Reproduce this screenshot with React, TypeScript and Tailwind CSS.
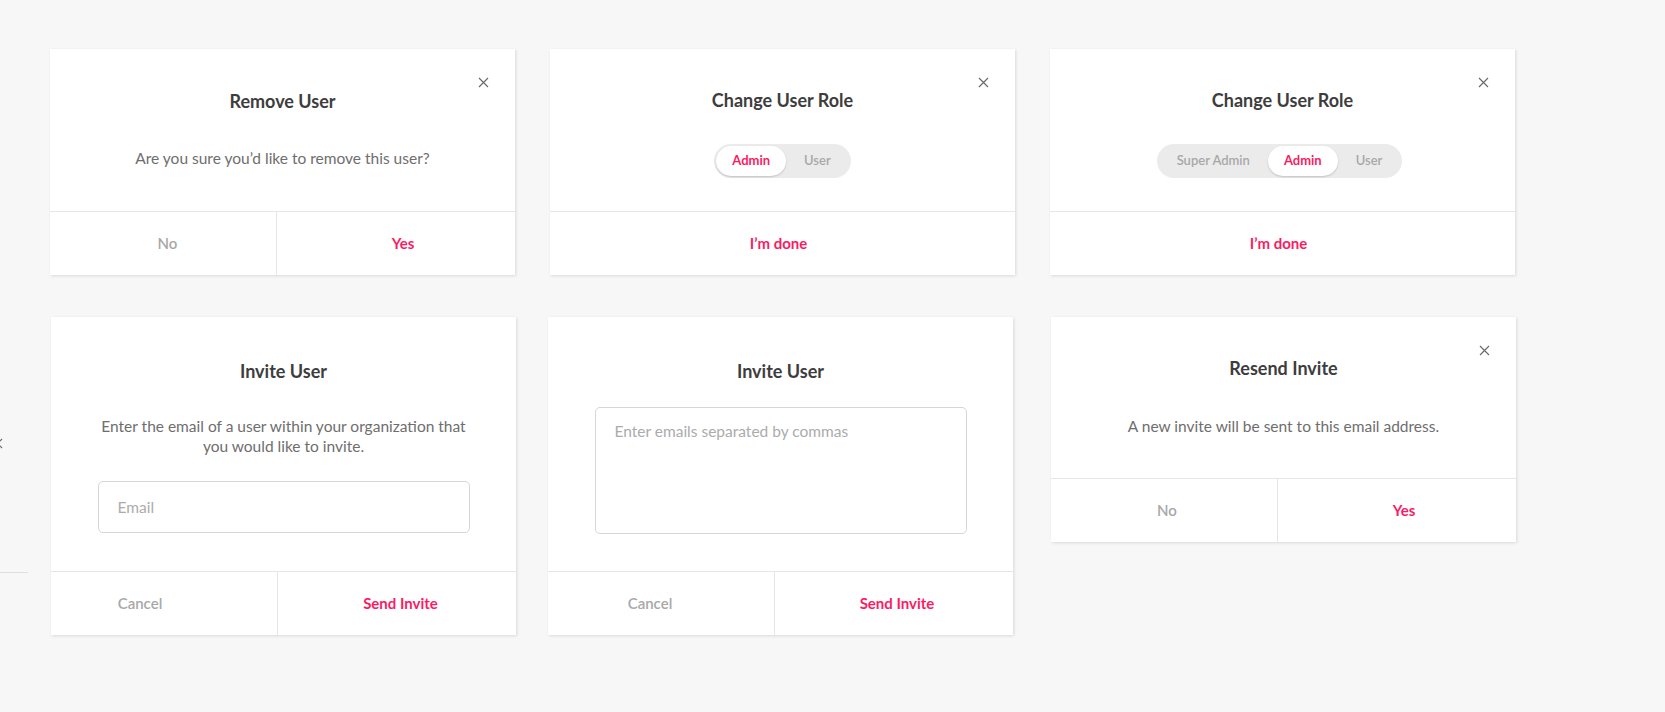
import React from 'react';

const font = { fontFamily: 'Lato, "Noto Sans", sans-serif' };

function CloseIcon() {
  return (
    <svg width="11" height="11" viewBox="0 0 11 11" className="text-[#6b6b6b]">
      <path d="M1 1L10 10M10 1L1 10" stroke="currentColor" strokeWidth="1.2" fill="none" />
    </svg>
  );
}

function Card({
  children,
  footer,
  close,
  className = '',
}: {
  children: React.ReactNode;
  footer: React.ReactNode;
  close?: boolean;
  className?: string;
}) {
  return (
    <div className={`relative flex w-[465px] flex-col bg-white shadow-[1px_1px_3px_rgba(0,0,0,0.12)] ${className}`}>
      {close && (
        <button className="absolute right-[24px] top-[26px] p-[2px]">
          <CloseIcon />
        </button>
      )}
      <div className="flex flex-1 flex-col items-center">{children}</div>
      <div className="flex h-[64px] border-t border-[#e6e6e6]">{footer}</div>
    </div>
  );
}

function Title({ children }: { children: React.ReactNode }) {
  return <h2 className="text-[18px] font-bold leading-[24px] text-[#3d3d3d]">{children}</h2>;
}

function SplitFooter({
  left,
  right,
  leftClass = '',
  rightClass = '',
}: {
  left: string;
  right: string;
  leftClass?: string;
  rightClass?: string;
}) {
  return (
    <>
      <button className={`flex w-[227px] items-center justify-center border-r border-[#e6e6e6] text-[15px] font-semibold text-[#a8a8a8] ${leftClass}`}>
        {left}
      </button>
      <button className={`flex flex-1 items-center justify-center text-[15px] font-bold text-[#fb1b63] ${rightClass}`}>
        {right}
      </button>
    </>
  );
}

function DoneFooter() {
  return (
    <button className="flex flex-1 items-center justify-center pr-[8px] text-[15px] font-bold text-[#fb1b63]">
      I’m done
    </button>
  );
}

function RoleToggle({ options, active }: { options: string[]; active: string }) {
  return (
    <div className="flex h-[34px] items-center rounded-full bg-[#ebebeb] p-[2px]">
      {options.map((o) => (
        <span
          key={o}
          className={
            o === active
              ? 'flex h-[30px] items-center rounded-full bg-white px-[16px] text-[13px] font-bold text-[#fb1b63] shadow-[0_1px_2px_rgba(0,0,0,0.18)]'
              : 'flex h-[30px] items-center px-[18px] text-[13px] font-semibold text-[#a8a8a8]'
          }
        >
          {o}
        </span>
      ))}
    </div>
  );
}

export default function App() {
  return (
    <div className="min-h-screen overflow-hidden bg-[#f7f7f7]" style={font}>
      <div className="flex pl-[50px] pt-[49px]">
        <Card close className="h-[226px]" footer={<SplitFooter left="No" right="Yes" leftClass="pl-[9px]" rightClass="pl-[14px]" />}>
          <div className="mt-[40px]">
            <Title>Remove User</Title>
          </div>
          <p className="mt-[35px] text-[15.5px] leading-[20px] text-[#6e6e6e]">Are you sure you’d like to remove this user?</p>
        </Card>
        <Card close className="ml-[35px] h-[226px]" footer={<DoneFooter />}>
          <div className="mt-[39px]">
            <Title>Change User Role</Title>
          </div>
          <div className="mt-[32px]">
            <RoleToggle options={['Admin', 'User']} active="Admin" />
          </div>
        </Card>
        <Card close className="ml-[35px] h-[226px]" footer={<DoneFooter />}>
          <div className="mt-[39px]">
            <Title>Change User Role</Title>
          </div>
          <div className="mt-[32px] pr-[6px]">
            <RoleToggle options={['Super Admin', 'Admin', 'User']} active="Admin" />
          </div>
        </Card>
      </div>

      <div className="mt-[42px] flex items-start">
        <div className="flex h-[318px] w-[28px] flex-col overflow-hidden">
          <div className="-ml-[8px] mt-[121px]">
            <CloseIcon />
          </div>
          <div className="mt-[123px] border-t border-[#e0e0e0]" />
        </div>
        <Card className="ml-[23px] h-[318px]" footer={<SplitFooter left="Cancel" right="Send Invite" leftClass="pr-[48px]" rightClass="pl-[7px]" />}>
          <div className="mt-[42px]">
            <Title>Invite User</Title>
          </div>
          <p className="mt-[33px] w-[384px] text-center text-[15.5px] leading-[20px] text-[#6e6e6e]">
            Enter the email of a user within your organization that you would like to invite.
          </p>
          <input
            placeholder="Email"
            className="mt-[25px] h-[52px] w-[372px] rounded-[5px] border border-[#d6d6d6] px-[19px] text-[15.5px] text-[#3d3d3d] outline-none placeholder:text-[#ababab]"
          />
        </Card>
        <Card className="ml-[32px] h-[318px]" footer={<SplitFooter left="Cancel" right="Send Invite" leftClass="pr-[22px]" rightClass="pl-[6px]" />}>
          <div className="mt-[42px]">
            <Title>Invite User</Title>
          </div>
          <textarea
            placeholder="Enter emails separated by commas"
            className="mt-[24px] h-[127px] w-[372px] resize-none rounded-[5px] border border-[#d6d6d6] px-[19px] py-[13px] text-[15.5px] leading-[20px] text-[#3d3d3d] outline-none placeholder:text-[#ababab]"
          />
        </Card>
        <Card close className="ml-[38px] h-[225px]" footer={<SplitFooter left="No" right="Yes" leftClass="pl-[6px]" rightClass="pl-[14px]" />}>
          <div className="mt-[39px]">
            <Title>Resend Invite</Title>
          </div>
          <p className="mt-[36px] text-[15.5px] leading-[20px] text-[#6e6e6e]">A new invite will be sent to this email address.</p>
        </Card>
      </div>
    </div>
  );
}
